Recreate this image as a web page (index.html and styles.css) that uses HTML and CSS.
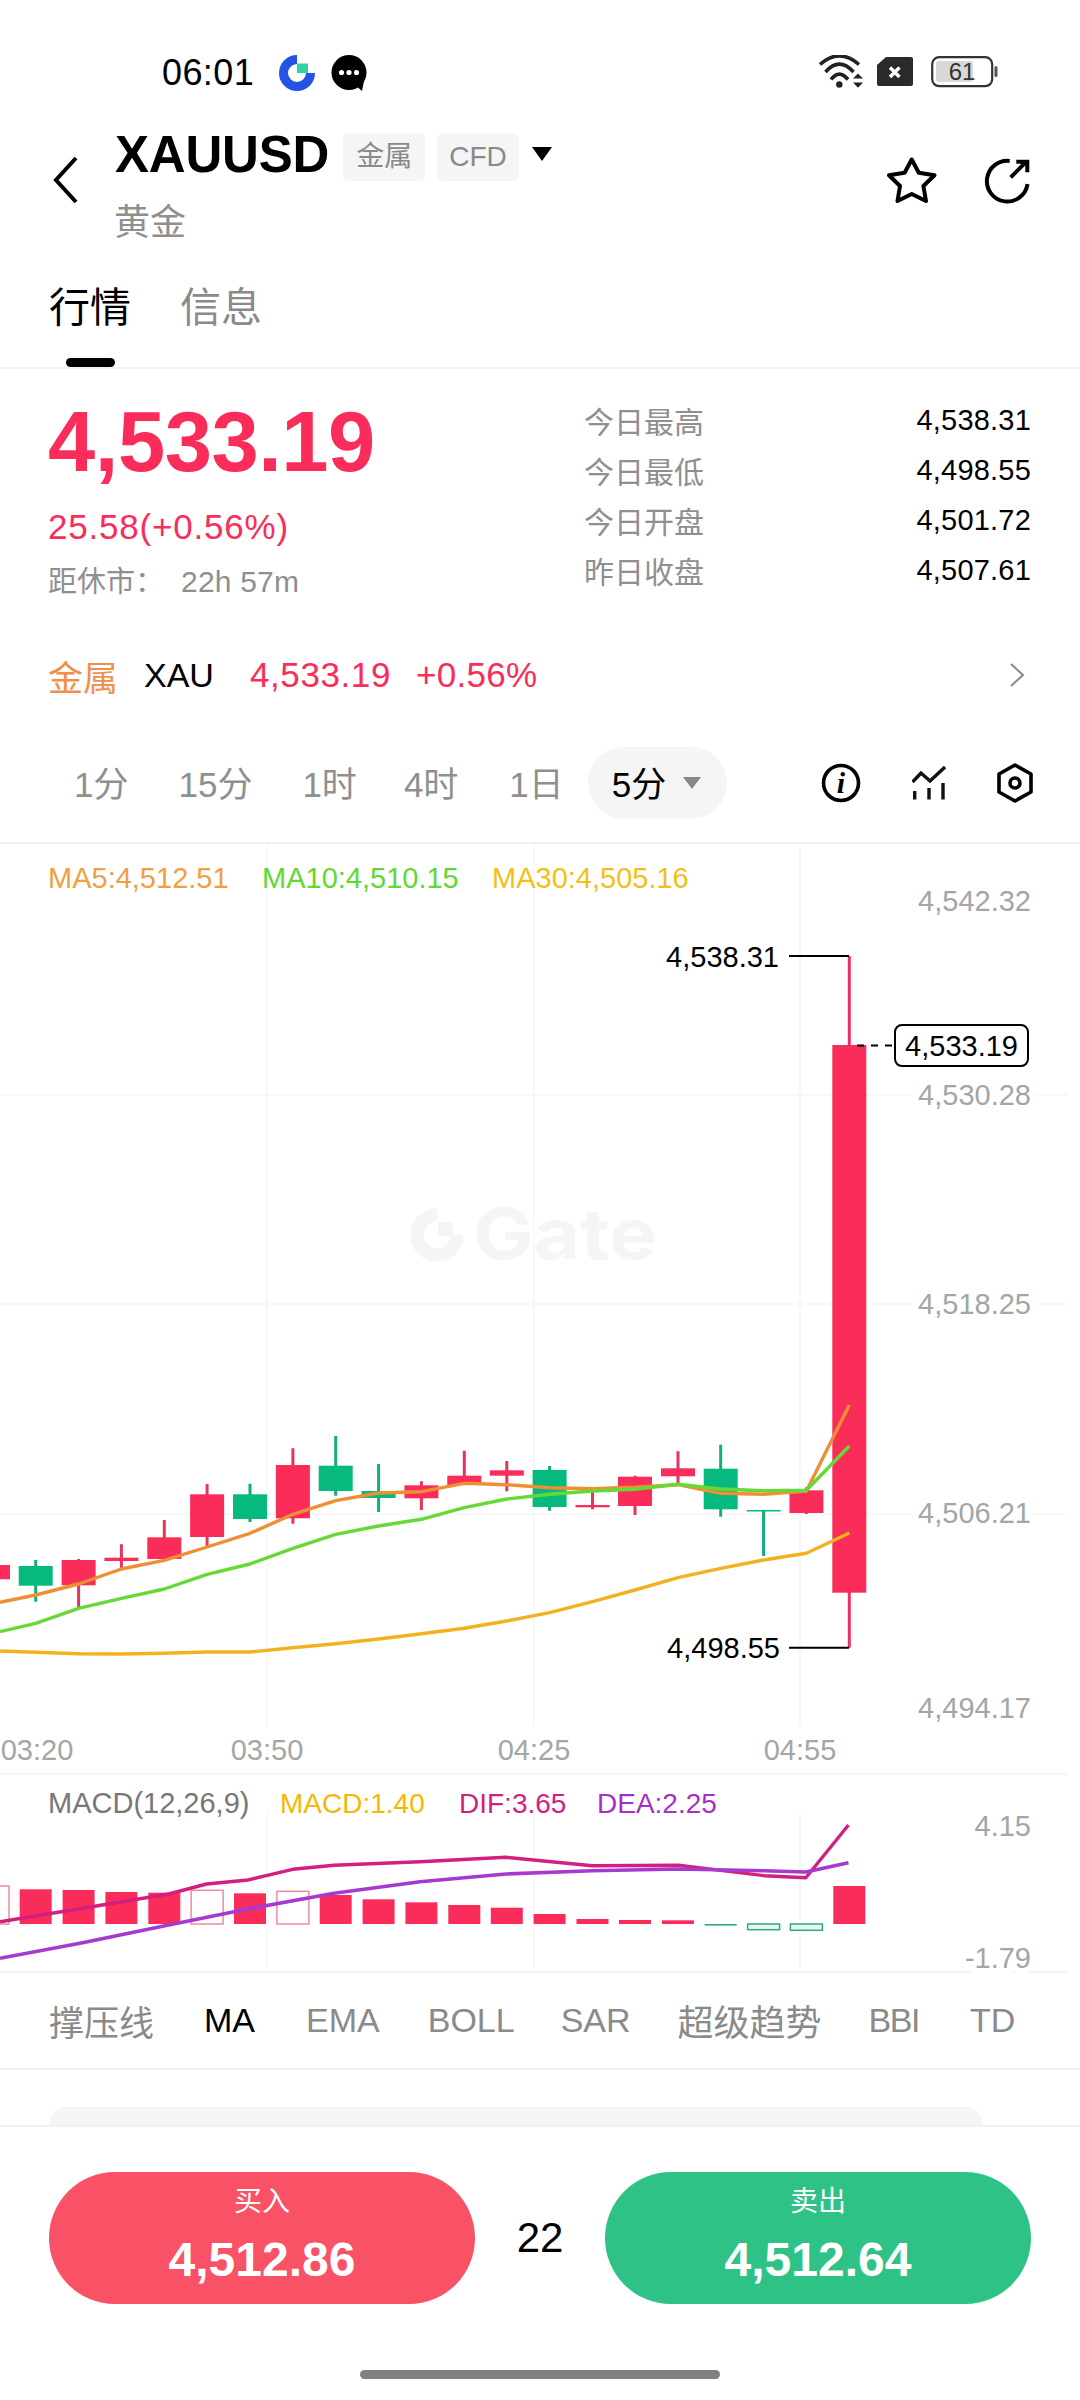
FILE: index.html
```html
<!DOCTYPE html>
<html lang="zh">
<head>
    <meta charset="UTF-8">
    <meta name="viewport" content="width=device-width, initial-scale=1.0">
    <title>XAUUSD</title>
    <link rel="stylesheet" href="styles.css">
</head>
<body>
    <!-- Status bar -->
    <div class="status">
        <span class="clock">06:01</span>
        <svg class="status-app" width="36" height="36" viewBox="0 0 36 36">
            <path d="M18 4.5A13.5 13.5 0 1 0 31.5 18" fill="none" stroke="#2354e6" stroke-width="9"/>
            <rect x="18" y="8.5" width="11" height="9.5" fill="#2ed3a0"/>
        </svg>
        <svg class="status-app" width="36" height="36" viewBox="0 0 36 36">
            <circle cx="18" cy="17.5" r="17.5" fill="#000"/>
            <path d="M24 30L31 36L33 26Z" fill="#000"/>
            <circle cx="10.5" cy="17.5" r="2.6" fill="#fff"/>
            <circle cx="18" cy="17.5" r="2.6" fill="#fff"/>
            <circle cx="25.5" cy="17.5" r="2.6" fill="#fff"/>
        </svg>
        <svg class="status-wifi" width="44" height="33" viewBox="0 0 44 33">
            <g fill="none" stroke="#222" stroke-width="3.6">
                <path d="M1 9.5Q20.3 -7.6 40 9.5"/>
                <path d="M6.5 17Q20.3 1.3 34.5 17"/>
                <path d="M12 24.5Q20.3 13.7 29 24.5"/>
            </g>
            <circle cx="20.3" cy="29.5" r="3.2" fill="#222"/>
            <path d="M34 23.5L39 18.5L44 23.5Z M34 27.5H44L39 32.7Z" fill="#222"/>
        </svg>
        <svg class="status-sim" width="36" height="29" viewBox="0 0 36 29">
            <path d="M9 0H34a2 2 0 0 1 2 2V27a2 2 0 0 1-2 2H2a2 2 0 0 1-2-2V8Z" fill="#2a2a2a"/>
            <path d="M13 10.5L22.5 20M22.5 10.5L13 20" stroke="#fff" stroke-width="3.4"/>
        </svg>
        <svg class="status-batt" width="67" height="32" viewBox="0 0 67 32">
            <rect x="1.2" y="1.2" width="60" height="29" rx="7" fill="none" stroke="#333" stroke-width="2.2"/>
            <rect x="5" y="5" width="37" height="21" rx="3" fill="#d8d8d8"/>
            <rect x="63.5" y="10" width="3" height="11" rx="1.5" fill="#555"/>
            <text class="batt-num" x="31" y="24">61</text>
        </svg>
    </div>

    <!-- Header -->
    <div class="header">
        <svg class="back" width="27" height="48" viewBox="0 0 27 48">
            <path d="M24 2L4 24L24 46" fill="none" stroke="#000" stroke-width="4"/>
        </svg>
        <div class="title-col">
            <div class="title-row">
                <span class="symbol">XAUUSD</span>
                <span class="tag">金属</span>
                <span class="tag tag-cfd">CFD</span>
                <span class="caret"></span>
            </div>
            <div class="name">黄金</div>
        </div>
        <div class="head-icons">
            <svg width="50" height="46" viewBox="0 0 50 46">
                <path d="M24.7 2.5L31.8 15.8L47.5 18.2L36.4 29L39 44L24.7 37L10.5 44L13 29L2 18.2L17.6 15.8Z" fill="none" stroke="#000" stroke-width="4" stroke-linejoin="round"/>
            </svg>
            <svg width="48" height="48" viewBox="0 0 48 48">
                <path d="M25.7 3.9A20.4 20.4 0 1 0 43.5 27" fill="none" stroke="#000" stroke-width="4"/>
                <path d="M26.7 20.3L42.3 4.7M32.3 4.7H43.3V15.3" fill="none" stroke="#000" stroke-width="4"/>
            </svg>
        </div>
    </div>

    <!-- Tabs -->
    <div class="tabs">
        <div class="tab active"><span class="tab-label">行情</span><i class="tab-bar"></i></div>
        <div class="tab"><span class="tab-label">信息</span></div>
    </div>

    <!-- Quote -->
    <div class="quote">
        <div class="quote-left">
            <div class="last">4,533.19</div>
            <div class="change">25.58(+0.56%)</div>
            <div class="closes"><span>距休市：</span><span class="closes-time">22h 57m</span></div>
        </div>
        <div class="stats">
            <div class="stat"><span>今日最高</span><b>4,538.31</b></div>
            <div class="stat"><span>今日最低</span><b>4,498.55</b></div>
            <div class="stat"><span>今日开盘</span><b>4,501.72</b></div>
            <div class="stat"><span>昨日收盘</span><b>4,507.61</b></div>
        </div>
    </div>

    <!-- Sector -->
    <div class="sector">
        <span class="sector-name">金属</span>
        <span class="sector-code">XAU</span>
        <span class="sector-price">4,533.19</span>
        <span class="sector-pct">+0.56%</span>
        <svg class="sector-more" width="16" height="24" viewBox="0 0 16 24">
            <path d="M2 1L14 12L2 23" fill="none" stroke="#888" stroke-width="2"/>
        </svg>
    </div>

    <!-- Timeframes -->
    <div class="frames">
        <span class="frame">1分</span>
        <span class="frame">15分</span>
        <span class="frame f-h1">1时</span>
        <span class="frame f-h4">4时</span>
        <span class="frame f-d1">1日</span>
        <span class="frame-on"><span class="frame-text">5分</span><i class="frame-caret"></i></span>
        <div class="tools">
            <svg width="40" height="40" viewBox="0 0 40 40">
                <circle cx="20" cy="20" r="17.5" fill="none" stroke="#000" stroke-width="3.6"/>
                <text class="info-i" x="20" y="30">i</text>
            </svg>
            <svg width="34" height="34" viewBox="0 0 34 34">
                <path d="M0.5 16L9 7L18 15L33 1" fill="none" stroke="#111" stroke-width="3.4"/>
                <path d="M2.7 25V33.5M17 22V33.5M31 17V33.5" fill="none" stroke="#111" stroke-width="3.4"/>
            </svg>
            <svg width="36" height="40" viewBox="0 0 36 40">
                <path d="M18 2L34 11V29L18 38L2 29V11Z" fill="none" stroke="#000" stroke-width="3.6" stroke-linejoin="round"/>
                <circle cx="18" cy="20" r="5" fill="none" stroke="#000" stroke-width="3.6"/>
            </svg>
        </div>
    </div>

    <!-- Chart: coordinates in the viewBox are page pixels -->
    <svg class="chart" width="1080" height="1130" viewBox="0 844 1080 1130">
        <g class="grid">
            <path d="M267 844V1727M534 844V1727M800 844V1727"/>
            <path d="M0 1095H1067M0 1304H1067M0 1514H1067"/>
            <path class="grid-strong" d="M0 1774H1067M0 1972H1067"/>
            <path d="M267 1812V1972M534 1812V1972M800 1812V1972"/>
        </g>

        <!-- watermark -->
        <g class="mark">
            <path d="M437 1215A20 20 0 1 0 457 1235" fill="none" stroke="#f5f5f5" stroke-width="13"/>
            <rect x="438" y="1222" width="15" height="14" fill="#f5f5f5"/>
            <text class="mark-text" x="473" y="1259" textLength="184" lengthAdjust="spacingAndGlyphs">Gate</text>
        </g>

        <!-- legend -->
        <text class="leg ma5" x="48" y="888">MA5:4,512.51</text>
        <text class="leg ma10" x="262" y="888">MA10:4,510.15</text>
        <text class="leg ma30" x="492" y="888">MA30:4,505.16</text>

        <!-- price axis -->
        <g class="axis">
            <text x="1031" y="911">4,542.32</text>
            <text x="1031" y="1105">4,530.28</text>
            <text x="1031" y="1314">4,518.25</text>
            <text x="1031" y="1523">4,506.21</text>
            <text x="1031" y="1718">4,494.17</text>
        </g>

        <!-- wicks -->
        <g class="wick-up">
            <path d="M78.6 1559V1607.7M121.4 1544.3V1570M164.3 1520V1560M207.1 1484V1546.7M292.9 1448.3V1523.7M421.4 1481.3V1510M464.3 1450.7V1485M506.8 1461V1491.3M592.5 1487.3V1509.3M635 1475.7V1515M678 1451.3V1483.3M806.4 1487.3V1514M849.3 956V1647.7"/>
        </g>
        <g class="wick-down">
            <path d="M35.7 1560V1601.7M250 1483.7V1522M335.7 1436V1495.7M378.6 1464V1512M549.6 1466V1510.7M720.7 1444.7V1516.7M763.6 1510V1556"/>
        </g>

        <!-- bodies -->
        <g class="up">
            <rect x="-24" y="1565" width="34" height="14.3"/>
            <rect x="61.6" y="1560" width="34" height="25.3"/>
            <rect x="104.4" y="1557.7" width="34" height="3.3"/>
            <rect x="147.3" y="1537.3" width="34" height="21.7"/>
            <rect x="190.1" y="1494.3" width="34" height="42.7"/>
            <rect x="275.9" y="1465" width="34" height="53.3"/>
            <rect x="404.4" y="1485.3" width="34" height="13"/>
            <rect x="447.3" y="1475.7" width="34" height="9.3"/>
            <rect x="489.8" y="1470.3" width="34" height="5.4"/>
            <rect x="575.5" y="1505" width="34" height="2.3"/>
            <rect x="618" y="1476.7" width="34" height="29.3"/>
            <rect x="661" y="1468.3" width="34" height="8"/>
            <rect x="789.4" y="1490.3" width="34" height="22.7"/>
            <rect x="832.3" y="1045" width="34" height="547.7"/>
        </g>
        <g class="down">
            <rect x="18.7" y="1566" width="34" height="19.7"/>
            <rect x="233" y="1494.3" width="34" height="24.7"/>
            <rect x="318.7" y="1465.7" width="34" height="25.3"/>
            <rect x="361.6" y="1491" width="34" height="7"/>
            <rect x="532.6" y="1470" width="34" height="37"/>
            <rect x="703.7" y="1468.7" width="34" height="40.6"/>
            <rect x="746.6" y="1510" width="34" height="1.5"/>
        </g>

        <!-- moving averages -->
        <polyline class="line l-ma30" points="0,1651 35.7,1652.3 78.6,1653.7 121.4,1654 164.3,1653.3 207.1,1652 250,1652 292.9,1647.7 335.7,1643.7 378.6,1639 421.4,1633.7 464.3,1628.3 506.8,1621 549.6,1612.7 592.5,1601.7 635,1590 678,1577.7 720.7,1568.3 763.6,1560 806.4,1553.3 849.3,1533"/>
        <polyline class="line l-ma5" points="0,1602.3 35.7,1595 78.6,1584 121.4,1569 164.3,1560.3 207.1,1547 250,1533.3 292.9,1514.3 335.7,1500.7 378.6,1493 421.4,1491.7 464.3,1483.3 506.8,1484.7 549.6,1487.7 592.5,1488.7 635,1487.3 678,1484.7 720.7,1493.3 763.6,1494.3 806.4,1491 849.3,1405"/>
        <polyline class="line l-ma10" points="0,1631.7 35.7,1623.3 78.6,1608.3 121.4,1598.3 164.3,1589 207.1,1574.3 250,1564 292.9,1548.3 335.7,1534.3 378.6,1526 421.4,1519.3 464.3,1507.7 506.8,1499 549.6,1494.3 592.5,1491 635,1489.3 678,1484.3 720.7,1489 763.6,1490.7 806.4,1490.3 849.3,1446"/>

        <!-- high / low / last callouts -->
        <text class="call" x="779" y="967">4,538.31</text>
        <path class="call-line" d="M789 956H849"/>
        <text class="call" x="780" y="1658">4,498.55</text>
        <path class="call-line" d="M789 1647.7H849"/>
        <path class="call-dash" d="M857 1045.5H895"/>
        <rect class="tag-box" x="895" y="1025" width="133" height="41" rx="7"/>
        <text class="call" x="1018" y="1056">4,533.19</text>

        <!-- time axis -->
        <g class="times">
            <text x="37" y="1760">03:20</text>
            <text x="267" y="1760">03:50</text>
            <text x="534" y="1760">04:25</text>
            <text x="800" y="1760">04:55</text>
        </g>

        <!-- MACD legend -->
        <text class="leg m-name" x="48" y="1813">MACD(12,26,9)</text>
        <text class="leg-sm m-macd" x="280" y="1813">MACD:1.40</text>
        <text class="leg-sm m-dif" x="459" y="1813">DIF:3.65</text>
        <text class="leg-sm m-dea" x="597" y="1813">DEA:2.25</text>
        <g class="axis">
            <text x="1031" y="1836">4.15</text>
            <text x="1031" y="1968">-1.79</text>
        </g>

        <!-- MACD bars -->
        <g class="up">
            <rect x="19.7" y="1889.3" width="32" height="34.7"/>
            <rect x="62.6" y="1890" width="32" height="34"/>
            <rect x="105.4" y="1892" width="32" height="32"/>
            <rect x="148.3" y="1892.7" width="32" height="31.3"/>
            <rect x="234" y="1893.3" width="32" height="30.7"/>
            <rect x="319.7" y="1895" width="32" height="29"/>
            <rect x="362.6" y="1899.3" width="32" height="24.7"/>
            <rect x="405.4" y="1902.3" width="32" height="21.7"/>
            <rect x="448.3" y="1905" width="32" height="19"/>
            <rect x="490.8" y="1907.7" width="32" height="16.3"/>
            <rect x="533.6" y="1914" width="32" height="10"/>
            <rect x="576.5" y="1919" width="32" height="5"/>
            <rect x="619" y="1920" width="32" height="4"/>
            <rect x="662" y="1920.3" width="32" height="3.7"/>
            <rect x="833.3" y="1886" width="32" height="38"/>
        </g>
        <g class="hollow-up">
            <rect x="-23" y="1886" width="32" height="38"/>
            <rect x="191.1" y="1890.3" width="32" height="33.7"/>
            <rect x="276.9" y="1891.3" width="32" height="32.7"/>
        </g>
        <rect class="flat-down" x="704.7" y="1924" width="32" height="1.6"/>
        <g class="hollow-down">
            <rect x="747.6" y="1924" width="32" height="5.7"/>
            <rect x="790.4" y="1924" width="32" height="6.3"/>
        </g>

        <polyline class="line l-dif" points="0,1921.7 82.6,1908.3 168.7,1894 206.6,1884 248,1880 292.7,1869.3 334,1865.3 420,1861.7 506,1857.3 592.3,1865.7 678.4,1865.3 764.5,1875.7 805.8,1877.7 848.5,1825"/>
        <polyline class="line l-dea" points="0,1958.3 82.6,1942.7 168.7,1925 251.4,1908.3 334,1893.3 420,1881.7 506,1874 592.3,1870.7 678.4,1869 764.5,1870.7 805.8,1872 848.5,1862.7"/>
    </svg>

    <!-- Indicators -->
    <div class="indicators">
        <span class="ind ind-cjk">撑压线</span>
        <span class="ind i-2 ind-on">MA</span>
        <span class="ind i-3">EMA</span>
        <span class="ind i-4">BOLL</span>
        <span class="ind i-5">SAR</span>
        <span class="ind i-6 ind-cjk">超级趋势</span>
        <span class="ind i-7">BBI</span>
        <span class="ind i-8">TD</span>
    </div>

    <div class="peek"><div class="peek-card"></div></div>

    <!-- Buy / sell -->
    <div class="footer">
        <div class="trade">
            <div class="btn buy"><span class="btn-label">买入</span><span class="btn-price">4,512.86</span></div>
            <div class="spread">22</div>
            <div class="btn sell"><span class="btn-label">卖出</span><span class="btn-price">4,512.64</span></div>
        </div>
        <div class="home-bar"></div>
    </div>
</body>
</html>
```

FILE: styles.css
```css
body {
    margin: 0;
    width: 1080px;
    height: 2400px;
    overflow: hidden;
    background: #fff;
    color: #000;
    font-family: "Liberation Sans", "Noto Sans CJK SC", sans-serif;
}
svg {
    display: block;
}

/* status bar */
.status {
    height: 126px;
    box-sizing: border-box;
    padding: 55px 0 0 162px;
    display: flex;
    align-items: flex-start;
}
.clock {
    font-size: 36px;
    line-height: 35px;
    width: 117px;
    letter-spacing: 0.4px;
}
.status-app {
    margin-right: 16px;
}
.status-wifi {
    margin-left: auto;
    margin-right: 14px;
}
.status-sim {
    margin-top: 2px;
    margin-right: 18px;
}
.status-batt {
    margin-top: 1px;
    margin-right: 82px;
}
.batt-num {
    font-size: 24px;
    fill: #333;
    text-anchor: middle;
}

/* header */
.header {
    height: 144px;
    box-sizing: border-box;
    display: flex;
    align-items: flex-start;
    padding-left: 52px;
}
.back {
    margin-top: 30px;
}
.title-col {
    margin-left: 36px;
}
.title-row {
    display: flex;
    align-items: center;
    height: 62px;
}
.symbol {
    font-size: 51px;
    font-weight: bold;
    letter-spacing: -0.2px;
    margin-top: -6px;
}
.tag {
    margin-left: 14px;
    height: 48px;
    line-height: 48px;
    padding: 0 13px;
    border-radius: 6px;
    background: #f5f5f5;
    color: #8a8a8a;
    font-size: 28px;
}
.tag-cfd {
    margin-left: 12px;
    padding: 0 12px;
}
.caret {
    width: 0;
    height: 0;
    margin: -6px 0 0 13px;
    border-left: 10px solid transparent;
    border-right: 10px solid transparent;
    border-top: 14px solid #000;
}
.name {
    margin-top: 10px;
    margin-left: -1px;
    font-size: 36px;
    line-height: 50px;
    color: #8f8f8f;
}
.head-icons {
    margin-left: auto;
    margin-top: 31px;
    padding-right: 48px;
    display: flex;
    align-items: flex-start;
    gap: 47px;
}

/* tabs */
.tabs {
    height: 99px;
    box-sizing: border-box;
    padding-left: 49px;
    display: flex;
    gap: 49px;
    border-bottom: 2px solid #f1f1f1;
}
.tab {
    display: flex;
    flex-direction: column;
    align-items: center;
}
.tab-label {
    font-size: 41px;
    line-height: 76px;
    color: #8a8a8a;
}
.tab.active .tab-label {
    color: #000;
}
.tab-bar {
    display: block;
    width: 49px;
    height: 9px;
    margin-top: 12px;
    border-radius: 5px;
    background: #000;
}

/* quote */
.quote {
    height: 261px;
    box-sizing: border-box;
    padding: 26px 49px 0 48px;
    display: flex;
    justify-content: space-between;
}
.last {
    margin-top: 2px;
    font-size: 85px;
    line-height: 90px;
    font-weight: bold;
    color: #fa2d5a;
    letter-spacing: -0.5px;
}
.change {
    margin-top: 15px;
    font-size: 35px;
    line-height: 50px;
    color: #fa2d5a;
    letter-spacing: 0.8px;
}
.closes {
    margin-top: 10px;
    font-size: 29px;
    line-height: 40px;
    color: #8f8f8f;
    display: flex;
}
.closes-time {
    margin-left: 17px;
    font-size: 30px;
    letter-spacing: 0.2px;
}
.stats {
    width: 447px;
}
.stat {
    height: 50px;
    display: flex;
    align-items: center;
    justify-content: space-between;
    font-size: 30px;
    color: #8f8f8f;
}
.stat b {
    font-weight: normal;
    font-size: 29px;
    letter-spacing: 0.2px;
    color: #000;
}

/* sector row */
.sector {
    height: 90px;
    box-sizing: border-box;
    padding: 0 55px 0 48px;
    margin-bottom: 2px;
    display: flex;
    align-items: center;
}
.sector-name {
    font-size: 35px;
    color: #f0914a;
}
.sector-code {
    margin-left: 26px;
    font-size: 34px;
}
.sector-price {
    margin-left: 36px;
    font-size: 35px;
    color: #fa2d5a;
    letter-spacing: 0.6px;
}
.sector-pct {
    margin-left: 25px;
    font-size: 35px;
    color: #fa2d5a;
    letter-spacing: 0.3px;
}
.sector-more {
    margin-left: auto;
}

/* timeframes */
.frames {
    height: 122px;
    box-sizing: border-box;
    padding: 2px 47px 0 74px;
    display: flex;
    align-items: center;
    gap: 50px;
    border-bottom: 2px solid #f1f1f1;
    font-size: 35px;
    color: #8f8f8f;
}
.frame,
.frame-text {
    margin-top: -4px;
}
.f-h4 {
    margin-left: -3px;
}
.f-d1 {
    margin-left: 1px;
}
.frame-on {
    margin-left: -26px;
    width: 139px;
    height: 72px;
    box-sizing: border-box;
    padding-left: 24px;
    display: flex;
    align-items: center;
    gap: 17px;
    border-radius: 36px;
    background: #f5f5f5;
    color: #000;
}
.frame-caret {
    width: 0;
    height: 0;
    border-left: 9px solid transparent;
    border-right: 9px solid transparent;
    border-top: 12px solid #888;
}
.tools {
    margin-left: auto;
    display: flex;
    align-items: center;
    gap: 51px;
}
.info-i {
    font-family: "Liberation Serif", serif;
    font-style: italic;
    font-weight: bold;
    font-size: 30px;
    text-anchor: middle;
    fill: #000;
}

/* chart */
.grid path {
    fill: none;
    stroke: #f6f6f6;
    stroke-width: 1.5;
}
.grid .grid-strong {
    stroke: #f1f1f1;
}
.mark-text {
    font-family: Inter, sans-serif;
    font-weight: 700;
    font-size: 70px;
    fill: #f5f5f5;
}
.leg {
    font-size: 29px;
}
.leg-sm {
    font-size: 28px;
}
.ma5 { fill: #f0a040; }
.ma10 { fill: #5fd832; }
.ma30 { fill: #f2c014; }
.m-name { fill: #777; }
.m-macd { fill: #f5b800; }
.m-dif { fill: #d3207f; }
.m-dea { fill: #a62fc9; }
.axis text {
    font-size: 29px;
    fill: #a5a5a5;
    text-anchor: end;
    stroke: #fff;
    stroke-width: 12px;
    paint-order: stroke;
}
.times text {
    font-size: 29px;
    fill: #a5a5a5;
    text-anchor: middle;
}
.wick-up path {
    fill: none;
    stroke: #e8335f;
    stroke-width: 3;
}
.wick-down path {
    fill: none;
    stroke: #12ad7c;
    stroke-width: 3;
}
.up rect {
    fill: #fa2d5a;
}
.down rect {
    fill: #06b97e;
}
.hollow-up rect {
    fill: #fff;
    stroke: #eb8ba2;
    stroke-width: 1.5;
}
.hollow-down rect {
    fill: #e8f7f2;
    stroke: #2fa983;
    stroke-width: 1.5;
}
.flat-down {
    fill: #2fa983;
}
.line {
    fill: none;
    stroke-width: 3.4;
    stroke-linejoin: round;
}
.l-ma5 { stroke: #ef8f34; }
.l-ma10 { stroke: #66d936; }
.l-ma30 { stroke: #f2b21f; }
.l-dif { stroke: #d3207f; }
.l-dea { stroke: #a63ad0; stroke-width: 3.6; }
.call {
    font-size: 29px;
    fill: #000;
    text-anchor: end;
}
.call-line {
    fill: none;
    stroke: #000;
    stroke-width: 2;
}
.call-dash {
    fill: none;
    stroke: #000;
    stroke-width: 2;
    stroke-dasharray: 7 7;
}
.tag-box {
    fill: #fff;
    stroke: #000;
    stroke-width: 2;
}

/* indicators */
.indicators {
    height: 96px;
    box-sizing: border-box;
    padding: 0 0 2px 49px;
    display: flex;
    align-items: center;
    border-bottom: 2px solid #f1f1f1;
    font-size: 34px;
    color: #8a8a8a;
}
.ind-cjk {
    font-size: 35px;
}
.ind-on {
    color: #000;
}
.i-2 { margin-left: 50px; }
.i-3 { margin-left: 51px; }
.i-4 { margin-left: 48px; }
.i-5 { margin-left: 46px; }
.i-6 { margin-left: 47px; font-size: 36px; }
.i-7 { margin-left: 47px; letter-spacing: -1.5px; }
.i-8 { margin-left: 51px; }

.peek {
    height: 55px;
    box-sizing: border-box;
    padding: 37px 97px 0 49px;
}
.peek-card {
    height: 18px;
    border-radius: 24px 24px 0 0;
    background: #f3f5f6;
}

/* footer */
.footer {
    border-top: 2px solid #f1f1f1;
    padding-top: 45px;
}
.trade {
    padding: 0 49px 0 49px;
    display: flex;
    align-items: center;
}
.btn {
    width: 426px;
    height: 132px;
    border-radius: 66px;
    display: flex;
    flex-direction: column;
    align-items: center;
    color: #fff;
}
.buy {
    background: #f95165;
}
.sell {
    background: #2ec287;
}
.btn-label {
    margin-top: 10px;
    font-size: 28px;
    line-height: 40px;
}
.btn-price {
    margin-top: 10px;
    font-size: 48px;
    line-height: 56px;
    font-weight: bold;
}
.spread {
    flex: 1;
    text-align: center;
    font-size: 42px;
}
.home-bar {
    width: 360px;
    height: 9px;
    margin: 66px auto 0;
    border-radius: 5px;
    background: #808080;
}
```
